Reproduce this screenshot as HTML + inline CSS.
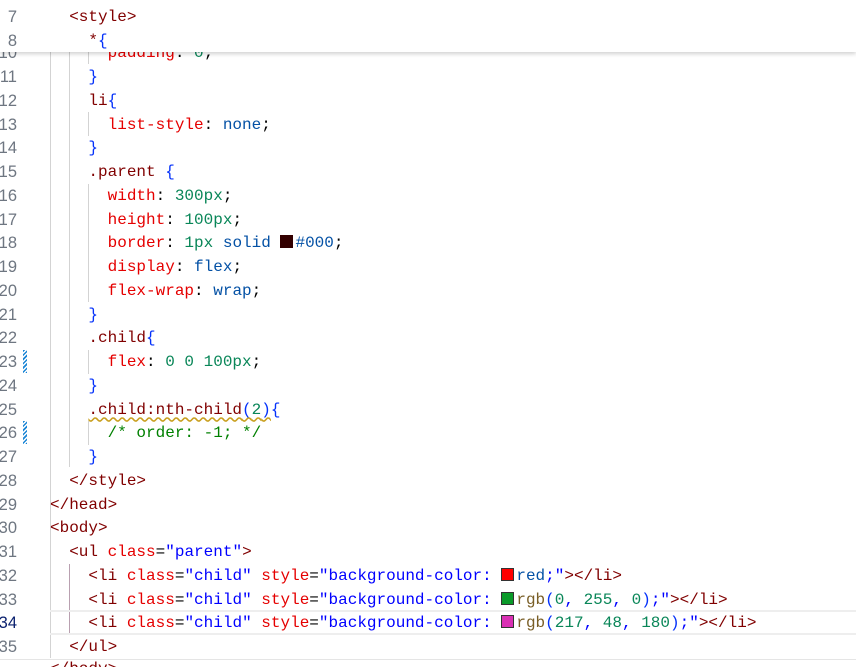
<!DOCTYPE html>
<html><head><meta charset="utf-8"><style>
body{margin:0;width:856px;height:666px;overflow:hidden;background:#fff;position:relative;font-family:"Liberation Mono",monospace;font-size:16px}
.w{position:absolute;left:0;top:2px;width:856px;height:664px}
.l{position:absolute;left:50px;height:23.75px;line-height:23.75px;white-space:pre;color:#000}
.n{position:absolute;left:-20px;width:37px;text-align:right;height:23.75px;line-height:23.75px;color:#6e7681;font-family:"Liberation Sans",sans-serif;font-size:16.5px}
.t{color:#800000}.a{color:#e50000}.s{color:#0000ff}.v{color:#098658}.k{color:#0451a5}.b{color:#0431fa}.c{color:#008000}
.g{position:absolute;width:1px;background:#d3d3d3}
.sw{display:inline-block;width:11px;height:11px;border:1px solid #333;margin:0 2px 0 0;vertical-align:-1px}
.hatch{position:absolute;left:23px;width:4px;background:repeating-linear-gradient(135deg,#1a85d6 0 1.5px,#fff 1.5px 3px)}
</style></head><body>
<div class="w">
<div class="g" style="left:50px;top:50px;height:606px"></div>
<div class="g" style="left:69px;top:50px;height:415px"></div>
<div class="g" style="left:88px;top:50px;height:12px"></div>
<div class="g" style="left:88px;top:110px;height:24px"></div>
<div class="g" style="left:88px;top:182px;height:118px"></div>
<div class="g" style="left:88px;top:348px;height:24px"></div>
<div class="g" style="left:88px;top:419px;height:24px"></div>
<div class="g" style="left:69px;top:562px;height:71px;background:#b9a0b0"></div>
<div class="hatch" style="top:348px;height:23px"></div>
<div class="hatch" style="top:419px;height:23px"></div>
<div style="position:absolute;left:50px;right:0;top:608px;height:21px;border-top:2px solid #eeeeee;border-bottom:2px solid #eeeeee"></div>

<div class="n" style="top:40.4px">10</div><div class="l" style="top:40.4px">      <span class="a">padding</span>: <span class="v">0</span>;</div>
<div class="n" style="top:64.1px">11</div><div class="l" style="top:64.1px">    <span class="b">}</span></div>
<div class="n" style="top:87.9px">12</div><div class="l" style="top:87.9px">    <span class="t">li</span><span class="b">{</span></div>
<div class="n" style="top:111.6px">13</div><div class="l" style="top:111.6px">      <span class="a">list-style</span>: <span class="k">none</span>;</div>
<div class="n" style="top:135.4px">14</div><div class="l" style="top:135.4px">    <span class="b">}</span></div>
<div class="n" style="top:159.1px">15</div><div class="l" style="top:159.1px">    <span class="t">.parent</span> <span class="b">{</span></div>
<div class="n" style="top:182.9px">16</div><div class="l" style="top:182.9px">      <span class="a">width</span>: <span class="v">300px</span>;</div>
<div class="n" style="top:206.6px">17</div><div class="l" style="top:206.6px">      <span class="a">height</span>: <span class="v">100px</span>;</div>
<div class="n" style="top:230.4px">18</div><div class="l" style="top:230.4px">      <span class="a">border</span>: <span class="v">1px</span> <span class="k">solid</span> <span class="sw" style="background:#300;border-color:#300"></span><span class="k">#000</span>;</div>
<div class="n" style="top:254.1px">19</div><div class="l" style="top:254.1px">      <span class="a">display</span>: <span class="k">flex</span>;</div>
<div class="n" style="top:277.9px">20</div><div class="l" style="top:277.9px">      <span class="a">flex-wrap</span>: <span class="k">wrap</span>;</div>
<div class="n" style="top:301.6px">21</div><div class="l" style="top:301.6px">    <span class="b">}</span></div>
<div class="n" style="top:325.4px">22</div><div class="l" style="top:325.4px">    <span class="t">.child</span><span class="b">{</span></div>
<div class="n" style="top:349.1px">23</div><div class="l" style="top:349.1px">      <span class="a">flex</span>: <span class="v">0 0 100px</span>;</div>
<div class="n" style="top:372.9px">24</div><div class="l" style="top:372.9px">    <span class="b">}</span></div>
<div class="n" style="top:396.6px">25</div><div class="l" style="top:396.6px">    <span class="t" style="text-decoration:underline wavy #c9a020;text-underline-offset:3px">.child:nth-child<span class="b">(</span><span class="v">2</span><span class="b">)</span></span><span class="b">{</span></div>
<div class="n" style="top:420.4px">26</div><div class="l" style="top:420.4px">      <span class="c">/* order: -1; */</span></div>
<div class="n" style="top:444.1px">27</div><div class="l" style="top:444.1px">    <span class="b">}</span></div>
<div class="n" style="top:467.9px">28</div><div class="l" style="top:467.9px"><span class="t">  &lt;/style&gt;</span></div>
<div class="n" style="top:491.6px">29</div><div class="l" style="top:491.6px"><span class="t">&lt;/head&gt;</span></div>
<div class="n" style="top:515.4px">30</div><div class="l" style="top:515.4px"><span class="t">&lt;body&gt;</span></div>
<div class="n" style="top:539.1px">31</div><div class="l" style="top:539.1px">  <span class="t">&lt;ul</span> <span class="a">class</span>=<span class="s">"parent"</span><span class="t">&gt;</span></div>
<div class="n" style="top:562.9px">32</div><div class="l" style="top:562.9px">    <span class="t">&lt;li</span> <span class="a">class</span>=<span class="s">"child"</span> <span class="a">style</span>=<span class="s">"background-color: <span class="sw" style="background:#f00"></span><span class="k">red</span>;"</span><span class="t">&gt;&lt;/li&gt;</span></div>
<div class="n" style="top:586.6px">33</div><div class="l" style="top:586.6px">    <span class="t">&lt;li</span> <span class="a">class</span>=<span class="s">"child"</span> <span class="a">style</span>=<span class="s">"background-color: <span class="sw" style="background:#0a9a2a"></span><span style="color:#795e26">rgb</span><span class="b">(</span><span class="v">0</span>, <span class="v">255</span>, <span class="v">0</span><span class="b">)</span>;"</span><span class="t">&gt;&lt;/li&gt;</span></div>
<div class="n" style="top:610.4px;color:#0b216f">34</div><div class="l" style="top:610.4px">    <span class="t">&lt;li</span> <span class="a">class</span>=<span class="s">"child"</span> <span class="a">style</span>=<span class="s">"background-color: <span class="sw" style="background:#d930b4"></span><span style="color:#795e26">rgb</span><span class="b">(</span><span class="v">217</span>, <span class="v">48</span>, <span class="v">180</span><span class="b">)</span>;"</span><span class="t">&gt;&lt;/li&gt;</span></div>
<div class="n" style="top:634.1px">35</div><div class="l" style="top:634.1px"><span class="t">  &lt;/ul&gt;</span></div>
</div>
<div style="position:absolute;left:0;right:0;top:659px;height:7px;background:#fff;border-top:1px solid #e5e5e5;overflow:hidden">
<div class="l" style="top:-2px;left:50px"><span class="t">&lt;/body&gt;</span></div></div>

<div style="position:absolute;left:0;top:0;width:856px;height:52px;background:#fff;box-shadow:0 2px 4px rgba(0,0,0,0.18)">
<div class="n" style="top:6.1px">7</div><div class="l" style="top:6.1px"><span class="t">  &lt;style&gt;</span></div>
<div class="n" style="top:29.9px">8</div><div class="l" style="top:29.9px">    <span class="t">*</span><span class="b">{</span></div>
</div>
</body></html>
